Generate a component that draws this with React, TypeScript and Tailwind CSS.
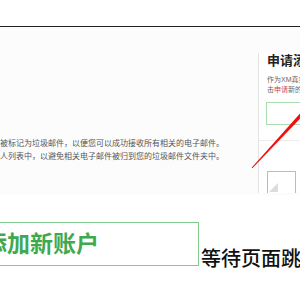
const cjk = "font-['Liberation_Sans','Noto_Sans_CJK_SC',sans-serif]"

const SidePanel = () => (
  <div className="w-[42px] shrink-0 mt-[26px] h-[140px] border-l border-[#e4e4e4] bg-white overflow-hidden">
    <div className="ml-[8px] text-[13px] leading-[15px] font-bold text-[#222] whitespace-nowrap">申请添加新账户</div>
    <div className="ml-[8px] mt-[7px] text-[7px] leading-[10px] text-[#666] whitespace-nowrap">
      <div>作为XM真实账户持有人</div>
      <div>
        击<span className="text-[#c44]">申请</span>新的账户
      </div>
    </div>
    <div className="ml-[7px] mt-[7px] w-[40px] h-[23px] border border-[#a9dcaf] bg-white" />
    <div className="mt-[15px] h-px bg-[#ececec]" />
    <div className="ml-[8px] mt-[30px] w-[29px] h-[30px] border border-b-0 border-[#f2a5a5] pl-[1px] pt-[11px]">
      <svg width="9" height="9" viewBox="0 0 9 9">
        <polygon points="9,0 9,9 0,9" fill="#dcdcdc" />
      </svg>
    </div>
  </div>
)

const App = () => {
  return (
    <div className={`relative w-[300px] h-[300px] bg-white overflow-hidden ${cjk}`}>
      <div className="h-[26px] bg-white" />
      <div className="h-px bg-[#222]" />

      <div className="flex items-start h-[168px] bg-[#fcfcfc]">
        <div className="flex-1 pt-[110px]">
          <div className="w-[224px] text-[8px] leading-[13px] text-[#555] overflow-hidden">
            <div className="flex justify-end whitespace-nowrap">请确保我们的邮件不会被标记为垃圾邮件，以便您可以成功接收所有相关的电子邮件。</div>
            <div className="flex justify-end whitespace-nowrap">并将我们添加到您的联系人列表中，以避免相关电子邮件被归到您的垃圾邮件文件夹中。</div>
          </div>
        </div>
        <SidePanel />
      </div>

      <div className="flex items-start mt-[27px] w-[300px] overflow-hidden">
        <div className="w-[200px] h-[44px] shrink-0 -ml-px border border-[#7fca8c] flex items-center overflow-hidden">
          <span className="shrink-0 -ml-4 text-[23px] leading-[26px] font-bold text-[#3fa94f] whitespace-nowrap">
            添加新账户
          </span>
        </div>
        <div className="shrink-0 ml-[2px] mt-[25px] text-[20px] leading-[24px] font-medium text-[#111] whitespace-nowrap">
          等待页面跳转
        </div>
      </div>

      <svg className="absolute inset-0 pointer-events-none" width="300" height="300" viewBox="0 0 300 300">
        <polygon points="251.6,167.7 252.4,168.3 303.3,115.2 300.7,112.8" fill="#f01010" />
      </svg>
    </div>
  )
}

export default App
